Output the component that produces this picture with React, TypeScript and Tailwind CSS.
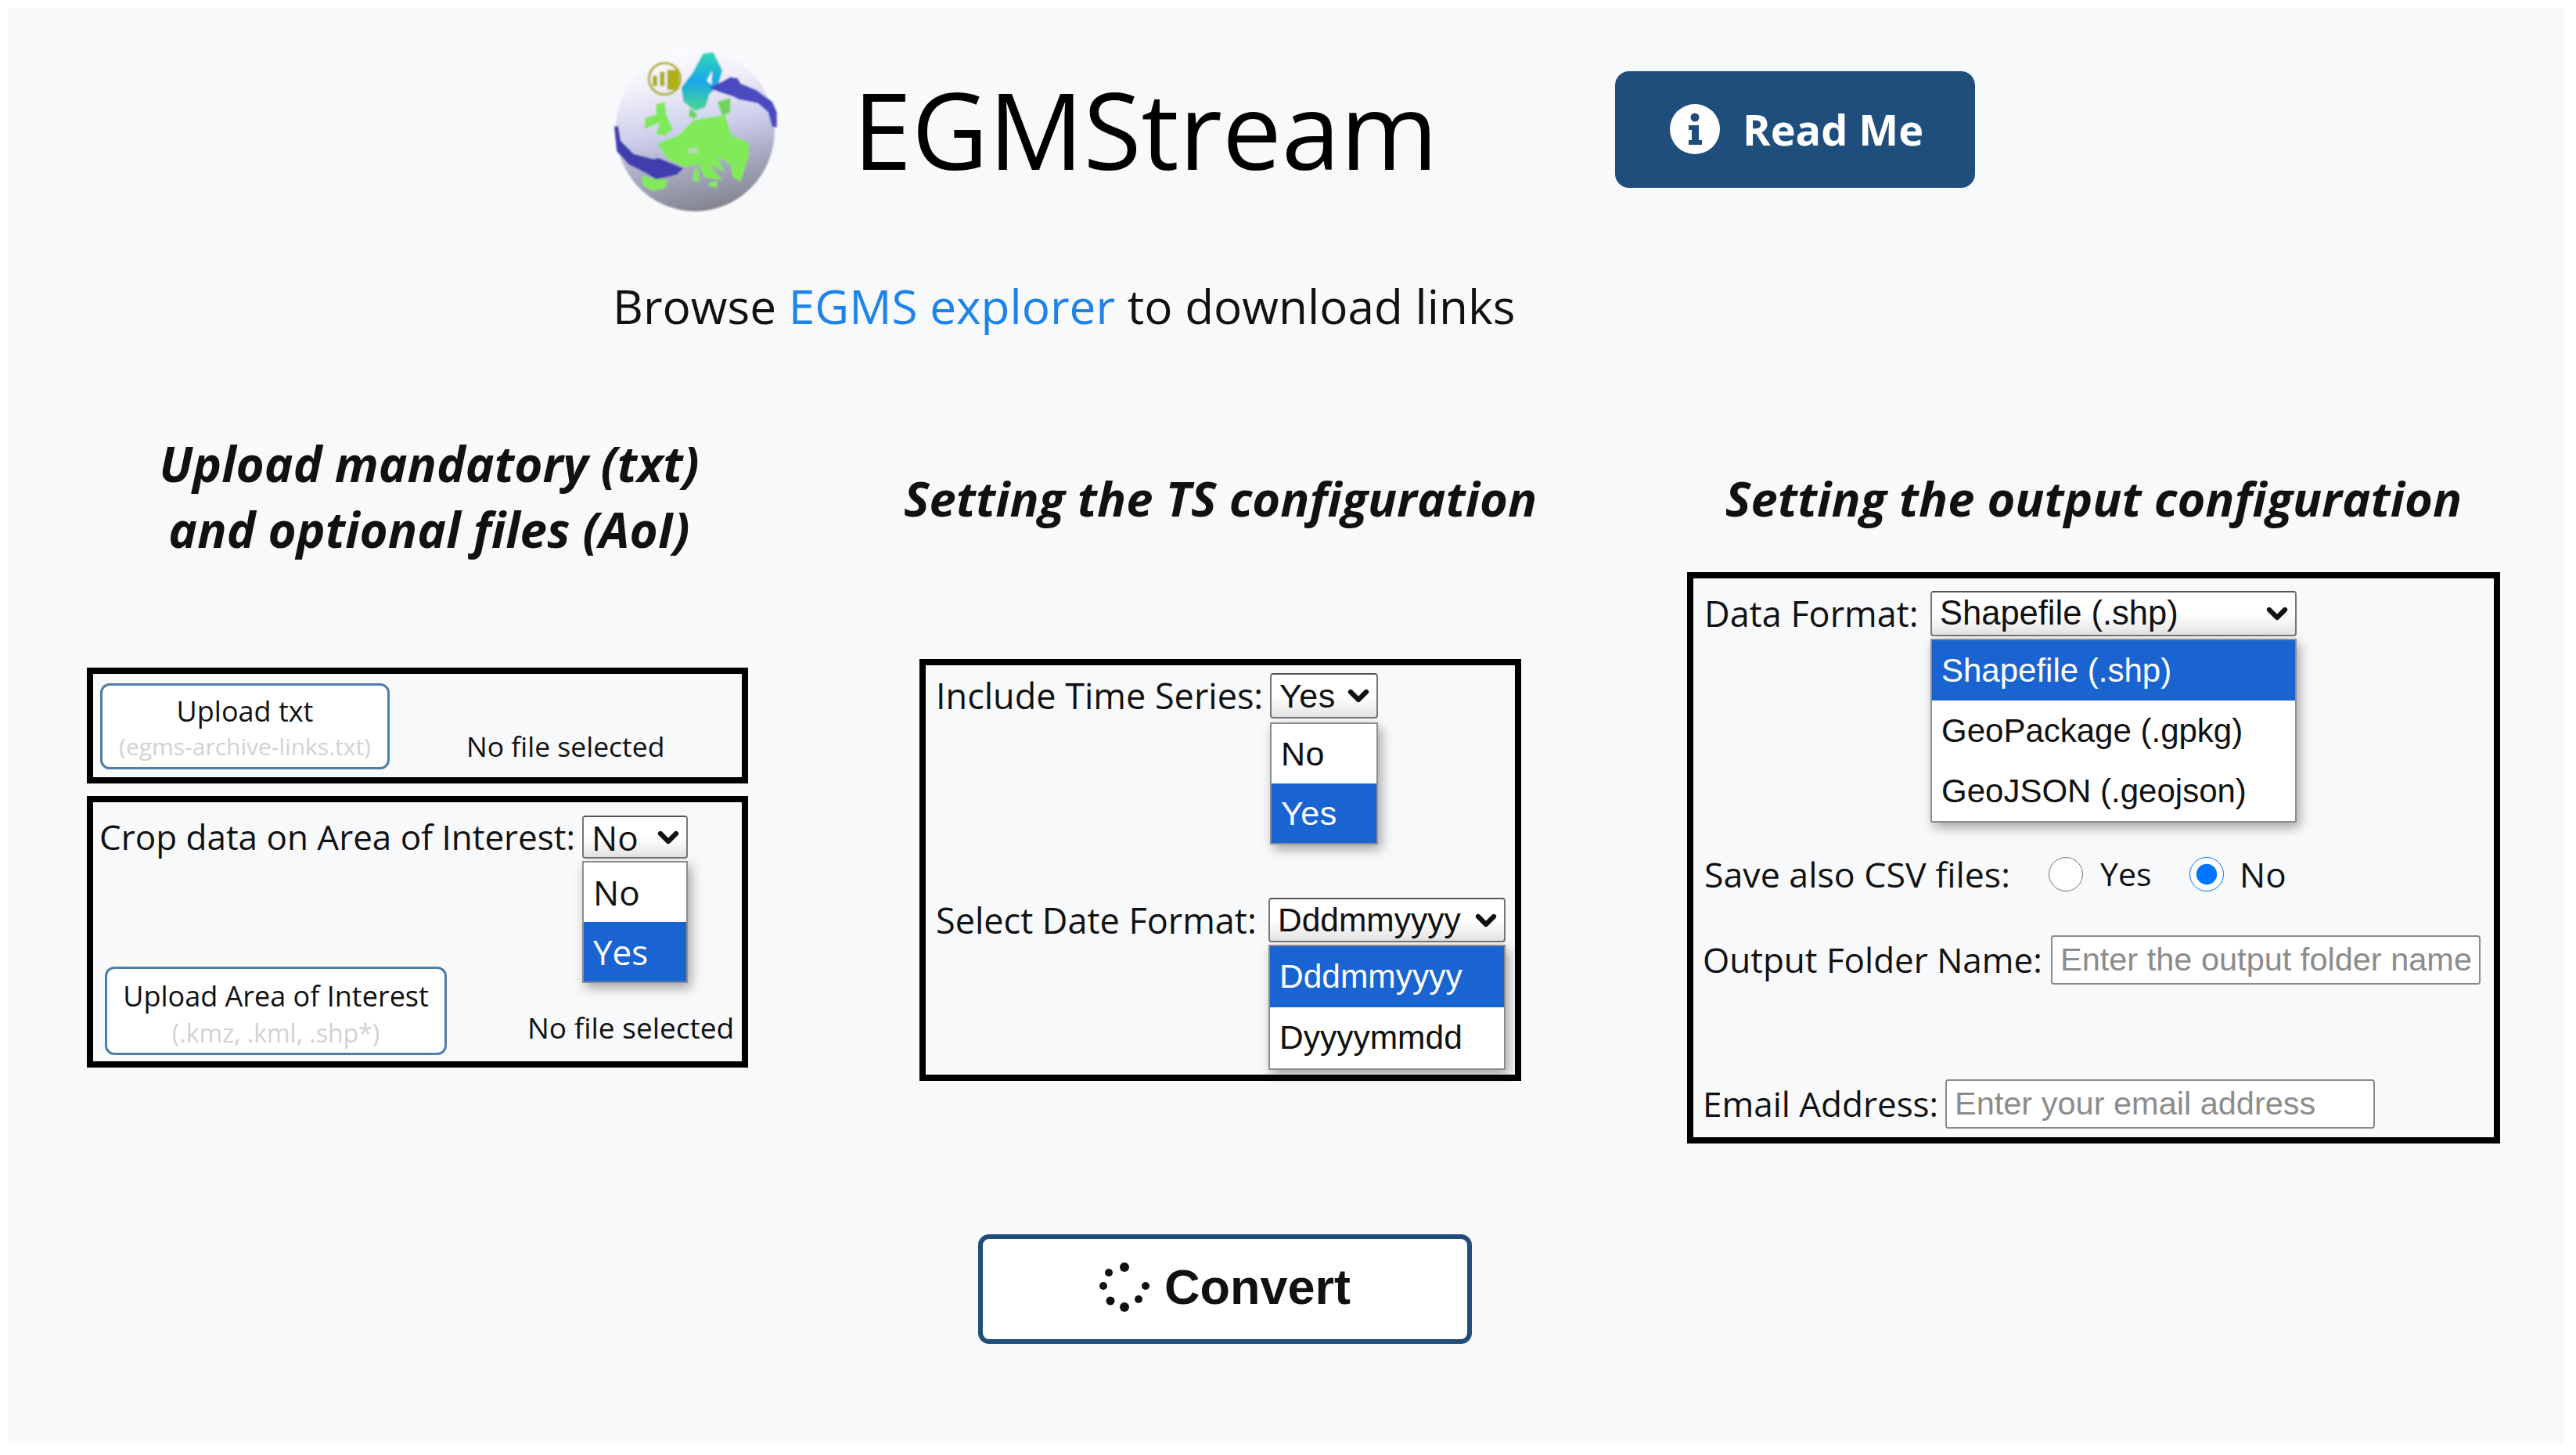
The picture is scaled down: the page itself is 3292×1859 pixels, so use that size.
import React from "react";

const sans = "font-['Open_Sans',sans-serif]";

function Chevron({ className }: { className: string }) {
  return (
    <svg viewBox="0 0 24 16" className={className} fill="none" stroke="#111" strokeWidth="5" strokeLinecap="round" strokeLinejoin="round">
      <path d="M4 4 L12 12 L20 4" />
    </svg>
  );
}

function Select({ value, options, selected, box, text, valueText, listTop, rowH }: { value: string; options: string[]; selected: number; box: string; text: string; valueText: string; listTop: string; rowH: string }) {
  return (
    <div className={`relative shrink-0 ${box}`}>
      <div className={`flex h-full items-center justify-between rounded-[4px] border-2 border-[#777] border-t-[#555] bg-gradient-to-b from-white via-white to-[#e4e4e4] pl-[10px] pr-[8px] text-[#111] ${valueText}`}>
        <span className="whitespace-nowrap">{value}</span>
        <Chevron className="h-[20px] w-[30px] shrink-0" />
      </div>
      <div className={`absolute left-0 right-0 z-10 border-2 border-[#8d8d8d] bg-white shadow-[4px_6px_14px_rgba(0,0,0,0.35)] ${listTop}`}>
        {options.map((o, i) => (
          <div key={o} className={`flex items-center whitespace-nowrap pl-[12px] ${rowH} ${text} ${i === selected ? "bg-[#1a64d2] text-white" : "text-[#111]"}`}>
            {o}
          </div>
        ))}
      </div>
    </div>
  );
}

function Globe() {
  return (
    <svg viewBox="0 0 780 750" className="h-[250px] w-[260px] shrink-0">
      <defs>
        <linearGradient id="g" x1="0.35" y1="0" x2="0.55" y2="1">
          <stop offset="0" stopColor="#fbfdff" />
          <stop offset="0.22" stopColor="#f1eef8" />
          <stop offset="0.5" stopColor="#cdcfec" />
          <stop offset="0.72" stopColor="#a9abc2" />
          <stop offset="1" stopColor="#84848f" />
        </linearGradient>
        <linearGradient id="n" x1="0" y1="0" x2="0" y2="1">
          <stop offset="0" stopColor="#2fd8b8" />
          <stop offset="0.5" stopColor="#1aa8e8" />
          <stop offset="1" stopColor="#49d890" />
        </linearGradient>
        <filter id="b"><feGaussianBlur stdDeviation="3" /></filter>
      </defs>
      <g filter="url(#b)">
        <ellipse cx="385" cy="378" rx="305" ry="312" fill="url(#g)" />
        <circle cx="268" cy="182" r="60" fill="none" stroke="#b4b422" strokeWidth="10" />
        <path d="M222 210 V170 H240 V210 Z M250 210 V155 H268 V210 Z M278 210 V148 H322 V225 H278 Z" fill="#b0b018" />
        <path d="M415 85 L455 80 L490 150 L470 215 L440 240 L425 290 L385 305 L340 270 L332 215 L375 160 Z" fill="url(#n)" />
        <path d="M430 190 L450 150 L448 205 Z" fill="#f4fbff" />
        <path d="M235 280 L268 270 L275 320 L300 375 L270 400 L235 395 L250 350 L190 375 L195 330 L235 320 Z" fill="#7ee85a" />
        <path d="M470 270 L520 255 L520 310 L490 325 Z M365 295 L395 320 L380 335 L360 325 Z" fill="#6fd45c" />
        <path d="M240 430 L320 400 L380 340 L500 320 L525 400 L590 425 L590 480 L560 575 L530 560 L520 510 L470 480 L500 540 L440 510 L430 500 L490 570 L420 560 L400 510 L340 520 L280 490 Z" fill="#80ea58" />
        <path d="M380 525 L400 530 L400 575 L378 575 Z M440 578 L472 575 L468 600 L435 592 Z M180 555 L280 570 L270 600 L225 612 L185 590 Z" fill="#80ea58" />
        <path d="M360 450 L390 445 L400 465 L360 470 Z" fill="#b7d8b8" />
        <path d="M440 215 L490 192 L520 175 L548 180 L560 200 L620 225 L680 270 L698 310 L698 368 L680 365 L665 310 L625 275 L555 262 L530 250 L470 230 Z" fill="#4b49c0" />
        <path d="M75 365 L90 362 L100 420 L150 470 L225 490 L245 485 L340 525 L315 550 L235 568 L200 545 L130 510 L85 460 Z" fill="#3f3dae" />
      </g>
    </svg>
  );
}

function Spinner() {
  const pts = [[32,6,6],[12,13,5],[5,30,5],[14,49,5.5],[32,57,6],[50,47,5],[59,30,5]];
  return (
    <svg viewBox="0 0 64 63" className="h-[63px] w-[64px] shrink-0">
      {pts.map(([x, y, r], i) => <circle key={i} cx={x} cy={y} r={r} fill="#111" />)}
    </svg>
  );
}

function UploadBtn({ box, label, hint, labelCls, hintCls }: { box: string; label: string; hint: string; labelCls: string; hintCls: string }) {
  return (
    <div className={`flex shrink-0 flex-col items-center rounded-[12px] border-[3px] border-[#4f7ea8] bg-white ${box}`}>
      <div className={`whitespace-nowrap text-[#111] ${labelCls}`}>{label}</div>
      <div className={`whitespace-nowrap text-[#d2d2d2] ${hintCls}`}>{hint}</div>
    </div>
  );
}

export default function App() {
  return (
    <div className={`h-[1859px] w-[3292px] bg-white px-[10px] pt-[10px] ${sans}`}>
      <div className="h-[1834px] w-[3266px] overflow-hidden bg-[#f8f9fb] pt-[30px]">
        <div className="ml-[750px] flex h-[250px] items-center">
          <Globe />
          <div className="ml-[70px] w-[745px] whitespace-nowrap text-[135px] leading-[150px] text-black">EGMStream</div>
          <button className="ml-[229px] flex h-[149px] w-[460px] items-center rounded-[18px] bg-[#1f4e7c] pl-[70px]">
            <svg viewBox="0 0 64 64" className="h-[64px] w-[64px] shrink-0">
              <circle cx="32" cy="32" r="32" fill="#fff" />
              <circle cx="32" cy="17" r="5.5" fill="#1f4e7c" />
              <path d="M24 27 H37 V46 H41 V52 H24 V46 H28 V33 H24 Z" fill="#1f4e7c" />
            </svg>
            <span className="ml-[29px] whitespace-nowrap text-[54px] font-bold leading-[64px] text-white">Read Me</span>
          </button>
        </div>

        <div className="ml-[773px] mt-[61px] h-[80px] whitespace-nowrap text-[60.3px] leading-[80px] text-[#111]">
          Browse <span className="text-[#1f84ea]">EGMS explorer</span> to download links
        </div>

        <div className="ml-[101px] flex items-start">
          <div className="w-[845px] shrink-0 pt-[119px]">
            <div className="ml-[30px] text-center text-[62px] font-bold italic leading-[84px] text-[#111]">
              <div>Upload mandatory (txt)</div>
              <div>and optional files (AoI)</div>
            </div>
            <div className="mt-[135px] h-[148px] border-[8px] border-black pl-[9px] pt-[12px]">
              <div className="flex">
                <UploadBtn box="h-[110px] w-[370px] pt-[10px]" label="Upload txt" hint="(egms-archive-links.txt)" labelCls="text-[36px] leading-[46px]" hintCls="text-[30px] leading-[44px]" />
                <div className="ml-[98px] mt-[55px] whitespace-nowrap text-[35.5px] leading-[50px] text-[#111]">No file selected</div>
              </div>
            </div>
            <div className="mt-[16px] h-[347px] border-[8px] border-black pt-[17px]">
              <div className="flex items-center pl-[8px]">
                <div className="w-[617px] shrink-0 whitespace-nowrap text-[44px] leading-[55px] text-[#111]">Crop data on Area of Interest:</div>
                <Select value="No" options={["No", "Yes"]} selected={1} box="h-[55px] w-[135px]" text="text-[44px]" valueText="text-[44px]" listTop="top-[58px]" rowH="h-[76px]" />
              </div>
              <div className="ml-[15px] mt-[138px] flex">
                <UploadBtn box="h-[113px] w-[437px] pt-[10px]" label="Upload Area of Interest" hint="(.kmz, .kml, .shp*)" labelCls="text-[36px] leading-[50px]" hintCls="text-[32px] leading-[44px]" />
                <div className="ml-[103px] mt-[53px] whitespace-nowrap text-[37px] leading-[50px] text-[#111]">No file selected</div>
              </div>
            </div>
          </div>

          <div className="ml-[219px] w-[769px] shrink-0 pt-[163px]">
            <div className="flex justify-center whitespace-nowrap text-[61.5px] font-bold italic leading-[84px] text-[#111]">Setting the TS configuration</div>
            <div className="mt-[164px] h-[539px] border-[8px] border-black pt-[10px] text-[45px] text-[#111]">
              <div className="flex items-center pl-[13px]">
                <div className="w-[427px] shrink-0 whitespace-nowrap leading-[58px]">Include Time Series:</div>
                <Select value="Yes" options={["No", "Yes"]} selected={1} box="h-[58px] w-[138px]" text="text-[43px] font-['Liberation_Sans',sans-serif] tracking-[0.5px]" valueText="text-[43px] font-['Liberation_Sans',sans-serif] tracking-[0.5px]" listTop="top-[63px]" rowH="h-[76px]" />
              </div>
              <div className="mt-[229px] flex items-center pl-[13px]">
                <div className="w-[425px] shrink-0 whitespace-nowrap leading-[55px]">Select Date Format:</div>
                <Select value="Dddmmyyyy" options={["Dddmmyyyy", "Dyyyymmdd"]} selected={0} box="h-[57px] w-[303px]" text="text-[42.5px] font-['Liberation_Sans',sans-serif]" valueText="text-[42.5px] font-['Liberation_Sans',sans-serif]" listTop="top-[60px]" rowH="h-[78px]" />
              </div>
            </div>
          </div>

          <div className="ml-[212px] w-[1039px] shrink-0 pt-[163px]">
            <div className="flex justify-center whitespace-nowrap text-[61.5px] font-bold italic leading-[84px] text-[#111]">Setting the output configuration</div>
            <div className="mt-[53px] h-[730px] border-[8px] border-black pt-[16px] text-[44px] text-[#111]">
              <div className="flex items-center pl-[14px]">
                <div className="w-[289px] shrink-0 whitespace-nowrap text-[45px] leading-[58px]">Data Format:</div>
                <Select value="Shapefile (.shp)" options={["Shapefile (.shp)", "GeoPackage (.gpkg)", "GeoJSON (.geojson)"]} selected={0} box="h-[58px] w-[468px]" text="text-[42px] font-['Liberation_Sans',sans-serif]" valueText="text-[43.5px] font-['Liberation_Sans',sans-serif]" listTop="top-[61px]" rowH="h-[77px]" />
              </div>
              <div className="mt-[274px] flex h-[60px] items-center pl-[14px]">
                <div className="w-[440px] shrink-0 whitespace-nowrap text-[44.7px]">Save also CSV files:</div>
                <input type="radio" name="csv" readOnly className="m-0 h-[44px] w-[44px] shrink-0 accent-[#0075ff]" />
                <span className="ml-[22px] w-[114px] shrink-0 text-[41px]">Yes</span>
                <input type="radio" name="csv" readOnly defaultChecked className="m-0 h-[44px] w-[44px] shrink-0 accent-[#0075ff]" />
                <span className="ml-[20px]">No</span>
              </div>
              <div className="mt-[46px] flex items-center pl-[12px]">
                <div className="w-[445px] shrink-0 whitespace-nowrap">Output Folder Name:</div>
                <input readOnly placeholder="Enter the output folder name" className="h-[63px] w-[549px] rounded-[4px] border-2 border-[#8a8a8a] bg-white px-[10px] font-['Liberation_Sans',sans-serif] text-[41.5px] placeholder:text-[#8c8c8c]" />
              </div>
              <div className="mt-[118px] flex items-center pl-[12px]">
                <div className="w-[310px] shrink-0 whitespace-nowrap">Email Address:</div>
                <input readOnly placeholder="Enter your email address" className="h-[63px] w-[549px] rounded-[4px] border-2 border-[#8a8a8a] bg-white px-[10px] font-['Liberation_Sans',sans-serif] text-[41.5px] placeholder:text-[#8c8c8c]" />
              </div>
            </div>
          </div>
        </div>

        <button className="ml-[1240px] mt-[116px] flex h-[140px] w-[631px] items-center justify-center gap-[19px] rounded-[14px] border-[6px] border-[#1f4e7c] bg-white pb-[6px] font-['Liberation_Sans',sans-serif] text-[63px] font-bold text-[#111]">
          <Spinner />
          <span>Convert</span>
        </button>
      </div>
    </div>
  );
}
